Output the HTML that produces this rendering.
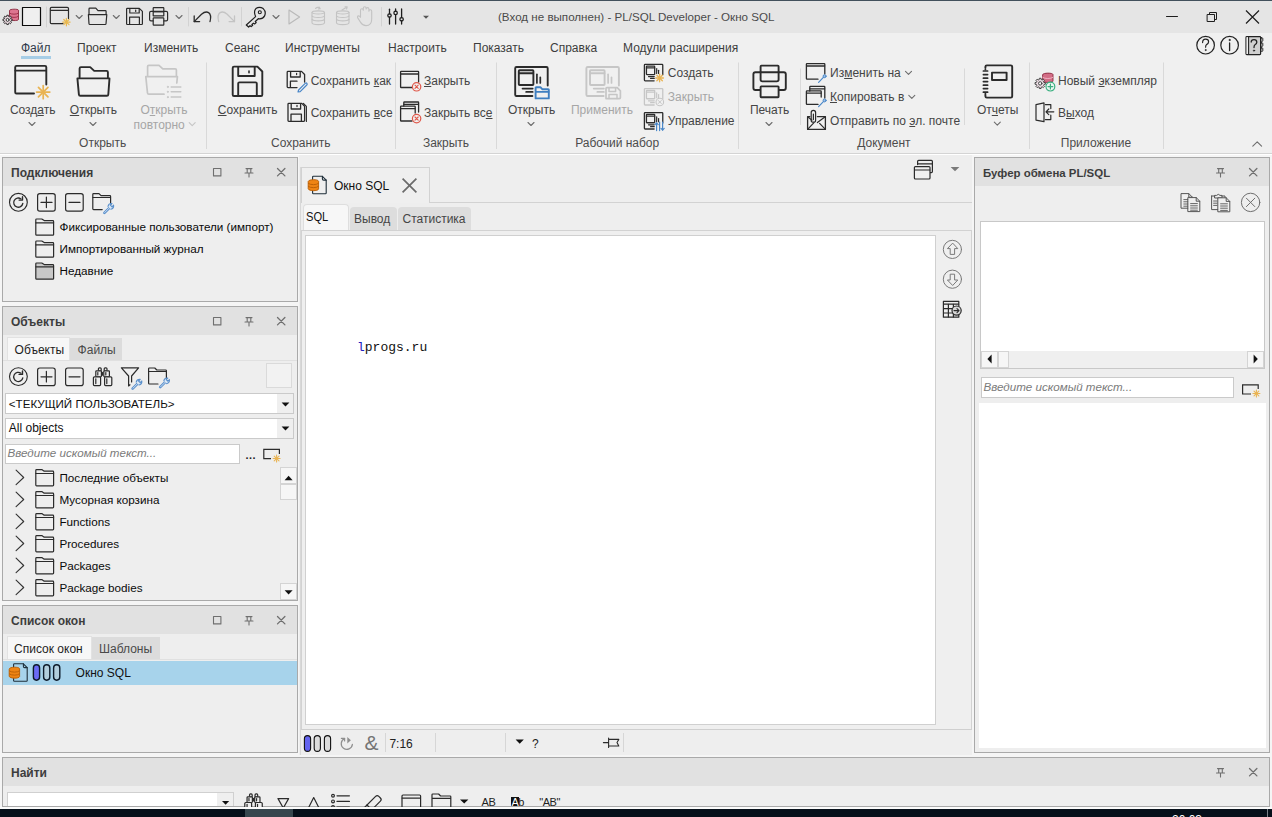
<!DOCTYPE html>
<html><head><meta charset="utf-8">
<style>
*{margin:0;padding:0;box-sizing:border-box}
html,body{width:1272px;height:817px;overflow:hidden;background:#f5f5f5;font-family:"Liberation Sans",sans-serif;font-size:12px;color:#1e1e1e}
.a{position:absolute}
.t{position:absolute;white-space:pre;line-height:14px;font-size:12px}
.dis{color:#a8a8a8}
.gl{color:#3c3c3c}
svg{position:absolute;overflow:visible}
u{text-decoration:underline;text-underline-offset:1px;text-decoration-thickness:1px}
.panel{position:absolute;border:1px solid #a9a9a9;background:#eeeeee}
.ph{position:absolute;left:0;right:0;top:0;height:28px;background:#e1e1e1}
.ptitle{position:absolute;left:8px;top:8px;font-weight:bold;font-size:12px;line-height:14px;color:#3d3d3d;white-space:pre}
.sep{position:absolute;width:1px;background:#d6d6d6}
</style></head>
<body>
<!-- top dark line -->
<div class="a" style="left:0;top:0;width:1272px;height:1px;background:#42505c"></div>
<!-- title bar -->
<div class="a" style="left:0;top:1px;width:1272px;height:32px;background:#e5e5e5"></div>
<!-- menu + ribbon -->
<div class="a" style="left:0;top:33px;width:1272px;height:120px;background:#f0f0f0"></div>
<div class="a" style="left:0;top:153px;width:1272px;height:1px;background:#d4d4d4"></div>
<div class="a" style="left:0;top:154px;width:1272px;height:1px;background:#ffffff"></div>
<div class="a" style="left:299px;top:155px;width:673px;height:600px;background:#eeeeee"></div>

<!-- TITLEBAR -->
<svg style="left:0;top:0" width="1272" height="33" viewBox="0 0 1272 33">
<g fill="none" stroke-linecap="round" stroke-linejoin="round">
 <!-- db gear -->
 <path d="M9.5 10.2 C9.5 8.8 18.5 8.8 18.5 10.2 V19.5 C18.5 21 9.5 21 9.5 19.5 Z" fill="#dd7590" stroke="#8a2a40" stroke-width="0.9"/>
 <path d="M9.6 13.2 C11 14.6 17 14.6 18.4 13.2 M9.6 16.4 C11 17.8 17 17.8 18.4 16.4" stroke="#9a2a45" stroke-width="0.9"/>
 <path d="M11.09 19.03 L12.24 19.13 L12.24 20.67 L11.09 20.77 L10.68 21.76 L11.42 22.63 L10.33 23.72 L9.46 22.98 L8.47 23.39 L8.37 24.54 L6.83 24.54 L6.73 23.39 L5.74 22.98 L4.87 23.72 L3.78 22.63 L4.52 21.76 L4.11 20.77 L2.96 20.67 L2.96 19.13 L4.11 19.03 L4.52 18.04 L3.78 17.17 L4.87 16.08 L5.74 16.82 L6.73 16.41 L6.83 15.26 L8.37 15.26 L8.47 16.41 L9.46 16.82 L10.33 16.08 L11.42 17.17 L10.68 18.04 Z" fill="#e8d7de" stroke="#333" stroke-width="1.0"/><circle cx="7.6" cy="19.9" r="1.5" fill="#f4f4f4" stroke="#333" stroke-width="1.0"/>
 <!-- square -->
 <rect x="22.5" y="7.5" width="18" height="18" fill="#efefef" stroke="#0a0a0a" stroke-width="1.2"/>
 <line x1="46.5" y1="7" x2="46.5" y2="27" stroke="#d2d2d2" stroke-width="1"/>
 <!-- new window -->
 <path d="M63 23.6 H51.5 Q50.3 23.6 50.3 22.4 V8.4 Q50.3 7.3 51.5 7.3 H67.3 Q68.5 7.3 68.5 8.4 V18.5" stroke="#2b2b2b" stroke-width="1.2"/>
 <line x1="50.5" y1="10.3" x2="68.3" y2="10.3" stroke="#2b2b2b" stroke-width="1.2"/>
 <g stroke="#e9b84e" stroke-width="1.2"><line x1="66.4" y1="18.4" x2="66.4" y2="25.8"/><line x1="62.7" y1="22.1" x2="70.1" y2="22.1"/><line x1="63.8" y1="19.5" x2="69" y2="24.7"/><line x1="69" y1="19.5" x2="63.8" y2="24.7"/></g>
 <path d="M76.2 15.5 L79.2 18.5 L82.2 15.5" stroke="#6e6e6e" stroke-width="1.1"/>
 <!-- folder -->
 <path d="M89 14 V9 Q89 8.2 89.8 8.2 H95.8 L98 10.6 H105.3 Q106.1 10.6 106.1 11.4 V14" stroke="#2b2b2b" stroke-width="1.2"/>
 <path d="M88.4 14.7 H106.8 L106 23.7 Q105.9 24.5 105.1 24.5 H89.9 Q89.1 24.5 89 23.7 Z" stroke="#2b2b2b" stroke-width="1.2"/>
 <path d="M113.3 15.5 L116.3 18.5 L119.3 15.5" stroke="#6e6e6e" stroke-width="1.1"/>
 <!-- save -->
 <path d="M126.6 9 Q126.6 8.3 127.3 8.3 H139.3 L142.4 11.4 V23.8 Q142.4 24.5 141.7 24.5 H127.3 Q126.6 24.5 126.6 23.8 Z" stroke="#2b2b2b" stroke-width="1.2"/>
 <path d="M129.8 8.5 V13 H139.2 V8.5" stroke="#2b2b2b" stroke-width="1.2"/>
 <line x1="135.7" y1="10" x2="135.7" y2="11.4" stroke="#2b2b2b" stroke-width="1.2"/>
 <path d="M129.6 24.3 V17.2 H139.4 V24.3" stroke="#2b2b2b" stroke-width="1.2"/>
 <!-- print -->
 <rect x="153.2" y="7.6" width="10.6" height="4" stroke="#2b2b2b" stroke-width="1.2" rx="0.6"/>
 <path d="M153 20.9 H151 Q149.6 20.9 149.6 19.5 V12.8 Q149.6 11.4 151 11.4 H166.2 Q167.6 11.4 167.6 12.8 V19.5 Q167.6 20.9 166.2 20.9 H164" stroke="#2b2b2b" stroke-width="1.2"/>
 <rect x="153.2" y="11.6" width="10.6" height="4.2" stroke="#2b2b2b" stroke-width="1.2"/>
 <rect x="153.2" y="17.8" width="10.6" height="7.4" stroke="#2b2b2b" stroke-width="1.2" rx="0.6"/>
 <path d="M176 15.5 L179 18.5 L182 15.5" stroke="#6e6e6e" stroke-width="1.1"/>
 <line x1="188.5" y1="7.5" x2="188.5" y2="26" stroke="#d2d2d2" stroke-width="1"/>
 <!-- undo -->
 <path d="M194.2 21.6 L201.5 14.3 Q205.5 10.8 208.6 12.6 Q211.8 14.8 210 21.6" stroke="#2b2b2b" stroke-width="1.3"/>
 <path d="M194.2 16 V21.6 H199.6" stroke="#2b2b2b" stroke-width="1.3"/>
 <!-- redo -->
 <path d="M234.5 21.6 L227.2 14.3 Q223.2 10.8 220.1 12.6 Q216.9 14.8 218.7 21.6" stroke="#c4c4c4" stroke-width="1.3"/>
 <path d="M234.5 16 V21.6 H229.1" stroke="#c4c4c4" stroke-width="1.3"/>
 <line x1="241.5" y1="7.5" x2="241.5" y2="26" stroke="#d2d2d2" stroke-width="1"/>
 <!-- key -->
 <path d="M255.6 16.6 L246.3 25 L248.6 27 L250 25.7 L251.2 26.6 L252.7 25.3 L251.9 24.4 L253.4 23.2 L254.6 24 L256.2 22.6 L255.3 21.5 L258.3 18.7 Q262.6 19.4 264.6 15.9 Q266.4 11.6 263.2 8.6 Q259.4 6 255.9 8.6 Q253.3 11.4 255.6 16.6 Z" stroke="#1e1e1e" stroke-width="1.2"/>
 <circle cx="259.8" cy="12.2" r="1.5" stroke="#1e1e1e" stroke-width="1.1"/>
 <path d="M273 15.5 L276 18.5 L279 15.5" stroke="#6e6e6e" stroke-width="1.1"/>
 <!-- play -->
 <path d="M289 10 L299.6 17 L289 24 Z" stroke="#b9b9b9" stroke-width="1.1"/>
 <!-- db commit -->
 <g stroke="#c3c3c3" stroke-width="1.1">
 <path d="M312 12.5 C312 10.3 324.5 10.3 324.5 12.5 V22.8 C324.5 25.2 312 25.2 312 22.8 Z"/>
 <path d="M312 16 C313.5 18 323 18 324.5 16 M312 19.4 C313.5 21.4 323 21.4 324.5 19.4 M312 12.5 C313.5 14.5 323 14.5 324.5 12.5"/>
 <path d="M315.5 8.5 Q318 6.2 320 8.6 M319.2 7 L320.2 8.8 L318.4 9"/>
 <path d="M336.5 12.5 C336.5 10.3 349 10.3 349 12.5 V22.8 C349 25.2 336.5 25.2 336.5 22.8 Z"/>
 <path d="M336.5 16 C338 18 347.5 18 349 16 M336.5 19.4 C338 21.4 347.5 21.4 349 19.4 M336.5 12.5 C338 14.5 347.5 14.5 349 12.5"/>
 <path d="M342 10 L347 7 M345 6.8 L347.2 6.9 L346.6 9"/>
 <!-- hand -->
 <path d="M360.5 17 V10.2 Q360.5 8.8 361.9 8.8 Q363.3 8.8 363.3 10.2 V8.2 Q363.3 6.8 364.7 6.8 Q366.1 6.8 366.1 8.2 V9 Q366.1 7.6 367.5 7.6 Q368.9 7.6 368.9 9 V11.2 Q368.9 9.8 370.3 9.8 Q371.7 9.8 371.7 11.2 V19 Q371.7 25.6 366 25.6 Q362.5 25.6 360.6 22.4 L357.6 17.6 Q357.2 16.2 358.4 15.9 Q359.6 15.8 360.5 17.3"/>
 </g>
 <line x1="381.5" y1="7.5" x2="381.5" y2="26" stroke="#d2d2d2" stroke-width="1"/>
 <!-- sliders -->
 <g stroke="#1e1e1e" stroke-width="1.3">
 <line x1="389.5" y1="9.2" x2="389.5" y2="13.8"/><line x1="389.5" y1="17.2" x2="389.5" y2="24"/><circle cx="389.5" cy="15.5" r="1.7"/>
 <line x1="395.6" y1="9" x2="395.6" y2="11.2"/><line x1="395.6" y1="14.6" x2="395.6" y2="24"/><circle cx="395.6" cy="12.9" r="1.7"/>
 <line x1="401.6" y1="9" x2="401.6" y2="17.6"/><line x1="401.6" y1="21" x2="401.6" y2="24"/><circle cx="401.6" cy="19.3" r="1.7"/>
 </g>
 <path d="M423 15.8 H429 L426 18.8 Z" fill="#555" stroke="none"/>
 <!-- window controls -->
 <line x1="1166.5" y1="16.5" x2="1177.5" y2="16.5" stroke="#1e1e1e" stroke-width="1"/>
 <rect x="1207.5" y="14.5" width="7" height="7" stroke="#1e1e1e" stroke-width="1"/>
 <path d="M1209.5 14.5 V12.5 H1216.5 V19.5 H1214.5" stroke="#1e1e1e" stroke-width="1"/>
 <path d="M1246 10.5 L1259 23.5 M1259 10.5 L1246 23.5" stroke="#1e1e1e" stroke-width="1.2" stroke-linecap="butt"/>
</g></svg>
<div class="t" style="left:498px;top:10px;color:#4a4a4a;font-size:11.6px">(Вход не выполнен) - PL/SQL Developer - Окно SQL</div>

<!-- MENU -->
<div id="menu">
<div class="t" style="left:21px;top:41px;color:#2f3a4a">Файл</div>
<div class="a" style="left:21px;top:56px;width:30px;height:3px;background:#a6cde6"></div>
<div class="t" style="left:77px;top:41px;color:#3d3d3d">Проект</div>
<div class="t" style="left:144px;top:41px;color:#3d3d3d">Изменить</div>
<div class="t" style="left:225px;top:41px;color:#3d3d3d">Сеанс</div>
<div class="t" style="left:285px;top:41px;color:#3d3d3d">Инструменты</div>
<div class="t" style="left:388px;top:41px;color:#3d3d3d">Настроить</div>
<div class="t" style="left:473px;top:41px;color:#3d3d3d">Показать</div>
<div class="t" style="left:550px;top:41px;color:#3d3d3d">Справка</div>
<div class="t" style="left:623px;top:41px;color:#3d3d3d">Модули расширения</div>
</div>

<!-- RIBBON -->
<div id="ribbon"><svg style="left:0;top:33px" width="1272" height="120" viewBox="0 33 1272 120"><g fill="none" stroke-linecap="round" stroke-linejoin="round"><line x1="206.5" y1="62.5" x2="206.5" y2="149" stroke="#d9d9d9" stroke-width="1" stroke-linecap="butt"/><line x1="395.5" y1="62.5" x2="395.5" y2="149" stroke="#d9d9d9" stroke-width="1" stroke-linecap="butt"/><line x1="496.5" y1="62.5" x2="496.5" y2="149" stroke="#d9d9d9" stroke-width="1" stroke-linecap="butt"/><line x1="738.5" y1="62.5" x2="738.5" y2="149" stroke="#d9d9d9" stroke-width="1" stroke-linecap="butt"/><line x1="1029.5" y1="62.5" x2="1029.5" y2="149" stroke="#d9d9d9" stroke-width="1" stroke-linecap="butt"/><line x1="1163.5" y1="62.5" x2="1163.5" y2="149" stroke="#d9d9d9" stroke-width="1" stroke-linecap="butt"/><line x1="800.5" y1="68.5" x2="800.5" y2="125" stroke="#d9d9d9" stroke-width="1" stroke-linecap="butt"/><line x1="964.5" y1="68.5" x2="964.5" y2="125" stroke="#d9d9d9" stroke-width="1" stroke-linecap="butt"/><path d="M34 93.5 H16.5 Q15.2 93.5 15.2 92.2 V67.2 Q15.2 65.9 16.5 65.9 H45 Q46.3 65.9 46.3 67.2 V84.5" stroke="#2b2b2b" stroke-width="1.9"/><line x1="15.4" y1="70.6" x2="46.1" y2="70.6" stroke="#2b2b2b" stroke-width="1.9"/><g stroke="#e9b453" stroke-width="1.7"><line x1="43.2" y1="85.5" x2="43.2" y2="98.69999999999999"/><line x1="36.6" y1="92.1" x2="49.800000000000004" y2="92.1"/><line x1="38.448" y1="87.348" x2="47.952000000000005" y2="96.85199999999999"/><line x1="47.952000000000005" y1="87.348" x2="38.448" y2="96.85199999999999"/></g><path d="M29 122.5 L32 125.5 L35 122.5" stroke="#6e6e6e" stroke-width="1.1"/><path d="M79.6 77.5 V68.4 Q79.6 67.1 80.9 67.1 H90.2 L94.2 70.9 H106.6 Q107.9 70.9 107.9 72.2 V77.5" stroke="#2b2b2b" stroke-width="1.9"/><path d="M77.4 78.4 H109.5 L108.3 94.5 Q108.2 95.8 106.9 95.8 H80.3 Q79 95.8 78.9 94.5 Z" stroke="#2b2b2b" stroke-width="1.9"/><path d="M90 122.5 L93 125.5 L96 122.5" stroke="#6e6e6e" stroke-width="1.1"/><path d="M147.6 75.5 V66.6 Q147.6 65.4 148.8 65.4 H159 L162.8 68.9 H175.2 Q176.4 68.9 176.4 70.1 V75.5" stroke="#c6c6c6" stroke-width="1.7"/><path d="M164 94.2 H148.8 Q147.6 94.2 147.5 93 L145.8 76.6 H177.4 L176.8 83" stroke="#c6c6c6" stroke-width="1.7"/><circle cx="167.8" cy="86.9" r="0.6" fill="#c6c6c6" stroke="#c6c6c6" stroke-width="0.8"/><line x1="171.2" y1="86.9" x2="180.8" y2="86.9" stroke="#c6c6c6" stroke-width="1.5"/><circle cx="167.8" cy="91.8" r="0.6" fill="#c6c6c6" stroke="#c6c6c6" stroke-width="0.8"/><line x1="171.2" y1="91.8" x2="180.8" y2="91.8" stroke="#c6c6c6" stroke-width="1.5"/><circle cx="167.8" cy="97.1" r="0.6" fill="#c6c6c6" stroke="#c6c6c6" stroke-width="0.8"/><line x1="171.2" y1="97.1" x2="180.8" y2="97.1" stroke="#c6c6c6" stroke-width="1.5"/><path d="M189.2 122.6 L192.2 125.6 L195.2 122.6" stroke="#c6c6c6" stroke-width="1.1"/><path d="M232.7 67.9 Q232.7 66.6 234 66.6 H257.4 L262.3 71.5 V94.7 Q262.3 96 261 96 H234 Q232.7 96 232.7 94.7 Z" stroke="#2b2b2b" stroke-width="1.9"/><path d="M238.2 67 V76 H254.7 V67" stroke="#2b2b2b" stroke-width="1.9"/><line x1="249" y1="71" x2="249" y2="72.8" stroke="#2b2b2b" stroke-width="1.6"/><path d="M238.2 95.6 V83.6 Q238.2 82.4 239.4 82.4 H255.6 Q256.8 82.4 256.8 83.6 V95.6" stroke="#2b2b2b" stroke-width="1.9"/><path d="M297 87.6 H288 Q287.2 87.6 287.2 86.8 V72.2 Q287.2 71.4 288 71.4 H301.5 L304.6 74.5 V82" stroke="#2b2b2b" stroke-width="1.3"/><path d="M290.6 71.6 V77 H300.2 V71.6" stroke="#2b2b2b" stroke-width="1.3"/><line x1="296.6" y1="73.4" x2="296.6" y2="74.6" stroke="#2b2b2b" stroke-width="1.2"/><path d="M290.4 87.4 V81.2 H297" stroke="#2b2b2b" stroke-width="1.3"/><path d="M298.6 90 L305.2 83.4 Q306.2 82.6 306.9 83.4 Q307.6 84.2 306.8 85 L300.2 91.6 L298 92 Z" stroke="#4a87c8" stroke-width="1.2"/><path d="M288 104.2 Q288 103.4 288.8 103.4 H301.8 L304.6 106.2 V120.6 Q304.6 121.4 303.8 121.4 H288.8 Q288 121.4 288 120.6 Z" stroke="#2b2b2b" stroke-width="1.3"/><path d="M291.2 103.6 V109 H300.6 V103.6" stroke="#2b2b2b" stroke-width="1.3"/><line x1="297" y1="105.4" x2="297" y2="106.6" stroke="#2b2b2b" stroke-width="1.2"/><path d="M291 121.2 V114.2 H301.4 V121.2" stroke="#2b2b2b" stroke-width="1.3"/><path d="M303.4 103.4 L306.4 106.4 V121.4" stroke="#2b2b2b" stroke-width="1.1"/><path d="M412 87.5 H401.2 Q400.6 87.5 400.6 86.9 V72 Q400.6 71.4 401.2 71.4 H418 Q418.6 71.4 418.6 72 V82" stroke="#2b2b2b" stroke-width="1.3"/><line x1="400.8" y1="74" x2="418.4" y2="74" stroke="#2b2b2b" stroke-width="1.3"/><circle cx="416.6" cy="86.8" r="4.2" fill="#f0f0f0" stroke="#e0584a" stroke-width="1.2"/><path d="M415.0 85.2 L418.20000000000005 88.39999999999999 M418.20000000000005 85.2 L415.0 88.39999999999999" stroke="#e0584a" stroke-width="1.1"/><path d="M403.8 106 V102.6 Q403.8 102 404.4 102 H418 Q418.6 102 418.6 102.6 V112" stroke="#2b2b2b" stroke-width="1.3"/><line x1="404" y1="104.4" x2="418.4" y2="104.4" stroke="#2b2b2b" stroke-width="1.3"/><path d="M412 121 H401.2 Q400.6 121 400.6 120.4 V106.8 Q400.6 106.2 401.2 106.2 H414.6 Q415.2 106.2 415.2 106.8 V113" stroke="#2b2b2b" stroke-width="1.3"/><line x1="400.8" y1="108.6" x2="415" y2="108.6" stroke="#2b2b2b" stroke-width="1.3"/><circle cx="416.6" cy="118.6" r="4.2" fill="#f0f0f0" stroke="#e0584a" stroke-width="1.2"/><path d="M415.0 117.0 L418.20000000000005 120.19999999999999 M418.20000000000005 117.0 L415.0 120.19999999999999" stroke="#e0584a" stroke-width="1.1"/><path d="M532.40 96.00 H516.50 Q515.20 96.00 515.20 94.70 V68.30 Q515.20 67.00 516.50 67.00 H546.40 Q547.70 67.00 547.70 68.30 V85.50" stroke="#2b2b2b" stroke-width="1.9"/><rect x="518.80" y="70.20" width="14.60" height="14.80" rx="0.80" stroke="#2b2b2b" stroke-width="1.9"/><line x1="519.00" y1="73.30" x2="533.20" y2="73.30" stroke="#2b2b2b" stroke-width="1.9"/><line x1="536.90" y1="74.30" x2="536.90" y2="83.00" stroke="#2b2b2b" stroke-width="1.71"/><line x1="540.30" y1="77.40" x2="540.30" y2="83.00" stroke="#2b2b2b" stroke-width="1.71"/><line x1="522.60" y1="88.60" x2="532.60" y2="88.60" stroke="#2b2b2b" stroke-width="1.9"/><line x1="526.20" y1="91.90" x2="532.60" y2="91.90" stroke="#2b2b2b" stroke-width="1.9"/><path d="M535.6 98.4 V87.8 Q535.6 87.2 536.2 87.2 H540.4 L542.2 89.2 H548.2 Q548.8 89.2 548.8 89.8 V98.4 Z" stroke="#3f7fc0" stroke-width="1.9"/><line x1="535.8" y1="91.8" x2="548.6" y2="91.8" stroke="#3f7fc0" stroke-width="1.7"/><path d="M528 122.5 L531 125.5 L534 122.5" stroke="#6e6e6e" stroke-width="1.1"/><path d="M603.60 96.00 H587.70 Q586.40 96.00 586.40 94.70 V68.30 Q586.40 67.00 587.70 67.00 H617.60 Q618.90 67.00 618.90 68.30 V85.50" stroke="#c6c6c6" stroke-width="1.9"/><rect x="590.00" y="70.20" width="14.60" height="14.80" rx="0.80" stroke="#c6c6c6" stroke-width="1.9"/><line x1="590.20" y1="73.30" x2="604.40" y2="73.30" stroke="#c6c6c6" stroke-width="1.9"/><line x1="608.10" y1="74.30" x2="608.10" y2="83.00" stroke="#c6c6c6" stroke-width="1.71"/><line x1="611.50" y1="77.40" x2="611.50" y2="83.00" stroke="#c6c6c6" stroke-width="1.71"/><line x1="593.80" y1="88.60" x2="603.80" y2="88.60" stroke="#c6c6c6" stroke-width="1.9"/><line x1="597.40" y1="91.90" x2="603.80" y2="91.90" stroke="#c6c6c6" stroke-width="1.9"/><path d="M606 98.6 V88.6 Q606 87.6 607 87.6 H617.2 L620.4 90.8 V97.6 Q620.4 98.6 619.4 98.6 Z" stroke="#c6c6c6" stroke-width="1.7"/><path d="M609 88 V91.6 H615.6 V88 M609 98.4 V94.4 H617 V98.4" stroke="#c6c6c6" stroke-width="1.5"/><path d="M654.12 80.78 H645.13 Q644.40 80.78 644.40 80.05 V65.13 Q644.40 64.40 645.13 64.40 H662.03 Q662.76 64.40 662.76 65.13 V74.85" stroke="#2b2b2b" stroke-width="1.3"/><rect x="646.43" y="66.21" width="8.25" height="8.36" rx="0.45" stroke="#2b2b2b" stroke-width="1.3"/><line x1="646.55" y1="67.96" x2="654.57" y2="67.96" stroke="#2b2b2b" stroke-width="1.3"/><line x1="656.66" y1="68.52" x2="656.66" y2="73.44" stroke="#2b2b2b" stroke-width="1.17"/><line x1="658.58" y1="70.28" x2="658.58" y2="73.44" stroke="#2b2b2b" stroke-width="1.17"/><line x1="648.58" y1="76.60" x2="654.23" y2="76.60" stroke="#2b2b2b" stroke-width="1.3"/><line x1="650.62" y1="78.47" x2="654.23" y2="78.47" stroke="#2b2b2b" stroke-width="1.3"/><g stroke="#e9b453" stroke-width="1.3"><line x1="659.6" y1="74.2" x2="659.6" y2="81.8"/><line x1="655.8000000000001" y1="78" x2="663.4" y2="78"/><line x1="656.864" y1="75.264" x2="662.336" y2="80.736"/><line x1="662.336" y1="75.264" x2="656.864" y2="80.736"/></g><path d="M654.12 104.98 H645.13 Q644.40 104.98 644.40 104.25 V89.33 Q644.40 88.60 645.13 88.60 H662.03 Q662.76 88.60 662.76 89.33 V99.05" stroke="#c6c6c6" stroke-width="1.3"/><rect x="646.43" y="90.41" width="8.25" height="8.36" rx="0.45" stroke="#c6c6c6" stroke-width="1.3"/><line x1="646.55" y1="92.16" x2="654.57" y2="92.16" stroke="#c6c6c6" stroke-width="1.3"/><line x1="656.66" y1="92.72" x2="656.66" y2="97.64" stroke="#c6c6c6" stroke-width="1.17"/><line x1="658.58" y1="94.48" x2="658.58" y2="97.64" stroke="#c6c6c6" stroke-width="1.17"/><line x1="648.58" y1="100.80" x2="654.23" y2="100.80" stroke="#c6c6c6" stroke-width="1.3"/><line x1="650.62" y1="102.67" x2="654.23" y2="102.67" stroke="#c6c6c6" stroke-width="1.3"/><circle cx="659.8" cy="102" r="3.8" fill="#f0f0f0" stroke="#c6c6c6" stroke-width="1.1"/><path d="M658.3 100.5 L661.3 103.5 M661.3 100.5 L658.3 103.5" stroke="#c6c6c6" stroke-width="1"/><path d="M654.12 128.98 H645.13 Q644.40 128.98 644.40 128.25 V113.33 Q644.40 112.60 645.13 112.60 H662.03 Q662.76 112.60 662.76 113.33 V123.05" stroke="#2b2b2b" stroke-width="1.3"/><rect x="646.43" y="114.41" width="8.25" height="8.36" rx="0.45" stroke="#2b2b2b" stroke-width="1.3"/><line x1="646.55" y1="116.16" x2="654.57" y2="116.16" stroke="#2b2b2b" stroke-width="1.3"/><line x1="656.66" y1="116.72" x2="656.66" y2="121.64" stroke="#2b2b2b" stroke-width="1.17"/><line x1="658.58" y1="118.48" x2="658.58" y2="121.64" stroke="#2b2b2b" stroke-width="1.17"/><line x1="648.58" y1="124.80" x2="654.23" y2="124.80" stroke="#2b2b2b" stroke-width="1.3"/><line x1="650.62" y1="126.67" x2="654.23" y2="126.67" stroke="#2b2b2b" stroke-width="1.3"/><g stroke="#4a87c8" stroke-width="1.2"><line x1="656.6" y1="123" x2="656.6" y2="130.6"/><line x1="659.6" y1="122" x2="659.6" y2="130.6"/><line x1="662.6" y1="122" x2="662.6" y2="130"/><path d="M655 124.6 L656.6 123 L658.2 124.6 M661 128.4 L662.6 130 L664.2 128.4"/></g><path d="M760.6 72 V66.4 Q760.6 65.6 761.4 65.6 H777.8 Q778.6 65.6 778.6 66.4 V72" stroke="#2b2b2b" stroke-width="1.9"/><path d="M760.2 90 H755.4 Q753.4 90 753.4 88 V74.2 Q753.4 72.2 755.4 72.2 H783.8 Q785.8 72.2 785.8 74.2 V88 Q785.8 90 783.8 90 H779" stroke="#2b2b2b" stroke-width="1.9"/><path d="M760.6 72.4 V79.6 Q760.6 81.4 762.4 81.4 H776.8 Q778.6 81.4 778.6 79.6 V72.4" stroke="#2b2b2b" stroke-width="1.9"/><rect x="760.6" y="86.4" width="18" height="10.8" rx="0.6" stroke="#2b2b2b" stroke-width="1.9"/><path d="M766 122.5 L769 125.5 L772 122.5" stroke="#6e6e6e" stroke-width="1.1"/><path d="M818 79.2 H807 Q806.4 79.2 806.4 78.6 V64.3 Q806.4 63.7 807 63.7 H824.2 Q824.8 63.7 824.8 64.3 V74" stroke="#2b2b2b" stroke-width="1.3"/><line x1="806.6" y1="66" x2="824.6" y2="66" stroke="#2b2b2b" stroke-width="1.3"/><line x1="818.6" y1="82.4" x2="823.6" y2="77.2" stroke="#4a87c8" stroke-width="1.2"/><circle cx="824.6" cy="76.2" r="1.5" fill="#9cc0e6" stroke="#4a87c8" stroke-width="1"/><path d="M905.5 71.4 L908.5 74.4 L911.5 71.4" stroke="#6e6e6e" stroke-width="1.1"/><path d="M809.8 91 V87 Q809.8 86.4 810.4 86.4 H824.2 Q824.8 86.4 824.8 87 V98" stroke="#2b2b2b" stroke-width="1.3"/><line x1="810" y1="88.8" x2="824.6" y2="88.8" stroke="#2b2b2b" stroke-width="1.3"/><path d="M818 104.4 H807 Q806.4 104.4 806.4 103.8 V91.4 Q806.4 90.8 807 90.8 H820.6 Q821.2 90.8 821.2 91.4 V97" stroke="#2b2b2b" stroke-width="1.3"/><line x1="806.6" y1="93.2" x2="821" y2="93.2" stroke="#2b2b2b" stroke-width="1.3"/><line x1="818.6" y1="106.6" x2="823.6" y2="101.4" stroke="#4a87c8" stroke-width="1.2"/><circle cx="824.6" cy="100.4" r="1.5" fill="#9cc0e6" stroke="#4a87c8" stroke-width="1"/><path d="M908.8 95.4 L911.8 98.4 L914.8 95.4" stroke="#6e6e6e" stroke-width="1.1"/><path d="M809.8 116.6 H807.6 V129.4 H825.4 V116.6 H817.4" stroke="#2b2b2b" stroke-width="1.3"/><path d="M807.8 129.2 L813.8 122.8 M825.2 129.2 L819.6 123.4 M817.4 122.6 L825.2 116.8 M808 117 L812 120.2" stroke="#2b2b2b" stroke-width="1.2"/><path d="M811.2 121 V112.6 Q811.2 110.4 813.4 110.4 Q815.6 110.4 815.6 112.6 V120.4 Q815.6 122.2 813.4 122.2 Q811.2 122.2 811.2 120.4 V114 M813.4 114 V119.6" stroke="#2b2b2b" stroke-width="1.2"/><path d="M985.4 68 V66.8 Q985.4 65.4 986.8 65.4 H1010.8 Q1012.2 65.4 1012.2 66.8 V96.2 Q1012.2 97.6 1010.8 97.6 H986.8 Q985.4 97.6 985.4 96.2 V94.8" stroke="#2b2b2b" stroke-width="1.9"/><line x1="983.4" y1="71" x2="987.6" y2="71" stroke="#2b2b2b" stroke-width="1.7"/><line x1="983.4" y1="74.6" x2="987.6" y2="74.6" stroke="#2b2b2b" stroke-width="1.7"/><line x1="983.4" y1="78.2" x2="987.6" y2="78.2" stroke="#2b2b2b" stroke-width="1.7"/><line x1="983.4" y1="81.6" x2="987.6" y2="81.6" stroke="#2b2b2b" stroke-width="1.7"/><line x1="983.4" y1="85.2" x2="987.6" y2="85.2" stroke="#2b2b2b" stroke-width="1.7"/><line x1="983.4" y1="88.6" x2="987.6" y2="88.6" stroke="#2b2b2b" stroke-width="1.7"/><line x1="983.4" y1="92.2" x2="987.6" y2="92.2" stroke="#2b2b2b" stroke-width="1.7"/><path d="M985.4 69.6 V69.6 M985.4 93.6 V93.6" stroke="#2b2b2b" stroke-width="1.9"/><rect x="992" y="72.6" width="14.6" height="7.4" stroke="#2b2b2b" stroke-width="1.9"/><path d="M994.3 122.2 L997.3 125.2 L1000.3 122.2" stroke="#6e6e6e" stroke-width="1.1"/><path d="M1042.6 74.6 C1042.6 72.6 1053 72.6 1053 74.6 V81 C1053 83 1042.6 83 1042.6 81 Z" fill="#d36d86" stroke="#8a2a40" stroke-width="0.9"/><path d="M1042.7 77.4 C1044.4 79 1051.2 79 1052.9 77.4" stroke="#f0b8c6" stroke-width="0.9"/><path d="M1044.08 82.44 L1045.33 82.55 L1045.33 84.25 L1044.08 84.36 L1043.63 85.46 L1044.43 86.42 L1043.22 87.63 L1042.26 86.83 L1041.16 87.28 L1041.05 88.53 L1039.35 88.53 L1039.24 87.28 L1038.14 86.83 L1037.18 87.63 L1035.97 86.42 L1036.77 85.46 L1036.32 84.36 L1035.07 84.25 L1035.07 82.55 L1036.32 82.44 L1036.77 81.34 L1035.97 80.38 L1037.18 79.17 L1038.14 79.97 L1039.24 79.52 L1039.35 78.27 L1041.05 78.27 L1041.16 79.52 L1042.26 79.97 L1043.22 79.17 L1044.43 80.38 L1043.63 81.34 Z" fill="#eadbe2" stroke="#444" stroke-width="1.0"/><circle cx="1040.2" cy="83.4" r="1.7" fill="#f4f4f4" stroke="#444" stroke-width="1.0"/><circle cx="1050.4" cy="86.6" r="4.4" fill="#eaf6f0" stroke="#3cb081" stroke-width="1.2"/><path d="M1050.4 84.2 V89 M1048 86.6 H1052.8" stroke="#3cb081" stroke-width="1.2"/><path d="M1036 104.6 L1044 102.9 V121.7 L1036 120.1 Z" stroke="#2b2b2b" stroke-width="1.2"/><path d="M1045.4 104.6 H1050.8 V108.6 M1050.8 115.2 V119.6 H1045.4" stroke="#2b2b2b" stroke-width="1.2"/><path d="M1053.8 111.8 H1046 M1048.8 109 L1046 111.8 L1048.8 114.6" stroke="#2b2b2b" stroke-width="1.2"/><circle cx="1205.6" cy="45.2" r="8.8" stroke="#222" stroke-width="1.2"/><circle cx="1229.6" cy="45.2" r="8.8" stroke="#222" stroke-width="1.2"/><line x1="1229.6" y1="43" x2="1229.6" y2="50.6" stroke="#222" stroke-width="1.3"/><circle cx="1229.6" cy="40" r="0.7" fill="#222" stroke="#222" stroke-width="0.6"/><path d="M1202.6 42.6 Q1202.6 39.2 1205.6 39.2 Q1208.6 39.2 1208.6 41.8 Q1208.6 43.6 1206.6 44.6 Q1205.6 45.2 1205.6 47.2" stroke="#222" stroke-width="1.2"/><circle cx="1205.6" cy="50" r="0.6" fill="#222" stroke="#222" stroke-width="0.6"/><rect x="1246" y="36.6" width="14.6" height="18" rx="0.8" fill="#d0d0d0" stroke="#222" stroke-width="1.2"/><rect x="1246.6" y="37.2" width="1.6" height="16.8" fill="#eeeeee" stroke="none"/><line x1="1248.6" y1="37" x2="1248.6" y2="54.2" stroke="#222" stroke-width="1.1"/><rect x="1260.8" y="37.8" width="2" height="3.6" rx="0.8" stroke="#222" stroke-width="1"/><rect x="1260.8" y="42.8" width="2" height="3.6" rx="0.8" stroke="#222" stroke-width="1"/><rect x="1260.8" y="47.8" width="2" height="3.6" rx="0.8" stroke="#222" stroke-width="1"/><path d="M1251.2 42 Q1251.2 39.6 1254 39.6 Q1256.8 39.6 1256.8 42.2 Q1256.8 43.8 1255 44.8 Q1254 45.4 1254 47.6" stroke="#222" stroke-width="1.3"/><circle cx="1254" cy="50.6" r="0.7" fill="#222" stroke="#222" stroke-width="0.6"/><path d="M1252.8 146.2 L1257.2 141.8 L1261.6 146.2" stroke="#6e6e6e" stroke-width="1.1"/></g></svg>
<div class="t" style="left:-37.3px;top:103px;width:140px;text-align:center;color:#454545">Созд<u>а</u>ть</div>
<div class="t" style="left:23.400000000000006px;top:103px;width:140px;text-align:center;color:#454545"><u>О</u>ткрыть</div>
<div class="t" style="left:94px;top:103px;width:140px;text-align:center;color:#a6a6a6">О<u>т</u>крыть</div>
<div class="t" style="left:133.5px;top:118px;color:#a6a6a6">повторно</div>
<div class="t" style="left:177.7px;top:103px;width:140px;text-align:center;color:#454545"><u>С</u>охранить</div>
<div class="t" style="left:461.6px;top:103px;width:140px;text-align:center;color:#454545">Открыть</div>
<div class="t" style="left:532px;top:103px;width:140px;text-align:center;color:#a6a6a6">Применить</div>
<div class="t" style="left:699.6px;top:103px;width:140px;text-align:center;color:#454545">Печать</div>
<div class="t" style="left:927.7px;top:103px;width:140px;text-align:center;color:#454545">От<u>ч</u>еты</div>
<div class="t" style="left:32.7px;top:136px;width:140px;text-align:center;color:#4c4c4c">Открыть</div>
<div class="t" style="left:230.8px;top:136px;width:140px;text-align:center;color:#4c4c4c">Сохранить</div>
<div class="t" style="left:376px;top:136px;width:140px;text-align:center;color:#4c4c4c">Закрыть</div>
<div class="t" style="left:547.2px;top:136px;width:140px;text-align:center;color:#4c4c4c">Рабочий набор</div>
<div class="t" style="left:813.9px;top:136px;width:140px;text-align:center;color:#4c4c4c">Документ</div>
<div class="t" style="left:1026px;top:136px;width:140px;text-align:center;color:#4c4c4c">Приложение</div>
<div class="t" style="left:310.7px;top:74px;color:#454545">Сохранить <u>к</u>ак</div>
<div class="t" style="left:310.7px;top:106px;color:#454545">Сохранить <u>в</u>се</div>
<div class="t" style="left:424px;top:74px;color:#454545"><u>З</u>акрыть</div>
<div class="t" style="left:424px;top:106px;color:#454545">Закрыть вс<u>е</u></div>
<div class="t" style="left:667.8px;top:65.5px;color:#454545">Создать</div>
<div class="t" style="left:667.8px;top:89.5px;color:#a6a6a6">Закрыть</div>
<div class="t" style="left:667.8px;top:113.5px;color:#454545">Управление</div>
<div class="t" style="left:830px;top:66px;color:#454545">Из<u>м</u>енить на</div>
<div class="t" style="left:830px;top:90px;color:#454545"><u>К</u>опировать в</div>
<div class="t" style="left:830px;top:114px;color:#454545">Отправить по <u>э</u>л. почте</div>
<div class="t" style="left:1058px;top:74px;color:#454545">Новый <u>э</u>кземпляр</div>
<div class="t" style="left:1058px;top:106px;color:#454545">В<u>ы</u>ход</div></div>

<!-- PANELS -->
<div class="panel" style="left:2px;top:157px;width:296px;height:145px">
 <div class="ph"></div><div class="ptitle">Подключения</div>
</div>
<div class="panel" style="left:2px;top:306px;width:296px;height:295px">
 <div class="ph"></div><div class="ptitle">Объекты</div>
</div>
<div class="panel" style="left:2px;top:605px;width:296px;height:148px">
 <div class="ph"></div><div class="ptitle">Список окон</div>
</div>
<div class="panel" style="left:974px;top:157px;width:296px;height:596px">
 <div class="ph"></div><div class="ptitle" style="font-size:11.45px">Буфер обмена PL/SQL</div>
</div>
<div class="panel" style="left:2px;top:757px;width:1268px;height:50px">
 <div class="ph"></div><div class="ptitle">Найти</div>
</div>

<!-- CENTER -->
<div class="t" style="left:59.5px;top:219.6px;color:#0a0a0a;font-size:11.7px">Фиксированные пользователи (импорт)</div>
<div class="t" style="left:59.5px;top:241.6px;color:#0a0a0a;font-size:11.7px">Импортированный журнал</div>
<div class="t" style="left:59.5px;top:263.6px;color:#0a0a0a;font-size:11.7px">Недавние</div>
<div class="a" style="left:7px;top:337px;width:63px;height:24px;background:#f7f7f7;border:1px solid #e2e2e2;border-bottom:none"></div>
<div class="a" style="left:70px;top:338px;width:52px;height:23px;background:#dcdcdc"></div>
<div class="a" style="left:3px;top:360px;width:294px;height:1px;background:#e0e0e0"></div>
<div class="t" style="left:14.6px;top:343px;color:#1e1e1e;">Объекты</div>
<div class="t" style="left:77.6px;top:343px;color:#4a4a4a;">Файлы</div>
<div class="a" style="left:266px;top:363px;width:26px;height:25px;background:#f2f2f2;border:1px solid #dadada"></div>
<div class="a" style="left:5px;top:393px;width:289px;height:21px;background:#fff;border:1px solid #cacaca"></div>
<div class="a" style="left:277px;top:394px;width:16px;height:19px;background:#efefef"></div>
<div class="a" style="left:5px;top:418px;width:289px;height:21px;background:#fff;border:1px solid #cacaca"></div>
<div class="a" style="left:277px;top:419px;width:16px;height:19px;background:#efefef"></div>
<div class="t" style="left:8.8px;top:397.4px;color:#111;font-size:11.6px">&lt;ТЕКУЩИЙ ПОЛЬЗОВАТЕЛЬ&gt;</div>
<div class="t" style="left:8.8px;top:420.6px;color:#111;">All objects</div>
<div class="a" style="left:5px;top:444px;width:235px;height:20px;background:#fff;border:1px solid #cacaca"></div>
<div class="t" style="left:7.5px;top:446px;color:#7b7b7b;font-style:italic;font-size:11.6px">Введите искомый текст...</div>
<div class="t" style="left:245.5px;top:448px;color:#222;font-weight:bold;font-size:11px;letter-spacing:0.5px">...</div>
<div class="t" style="left:59.4px;top:470.6px;color:#0a0a0a;font-size:11.7px">Последние объекты</div>
<div class="t" style="left:59.4px;top:492.6px;color:#0a0a0a;font-size:11.7px">Мусорная корзина</div>
<div class="t" style="left:59.4px;top:514.6px;color:#0a0a0a;font-size:11.7px">Functions</div>
<div class="t" style="left:59.4px;top:536.6px;color:#0a0a0a;font-size:11.7px">Procedures</div>
<div class="t" style="left:59.4px;top:558.6px;color:#0a0a0a;font-size:11.7px">Packages</div>
<div class="t" style="left:59.4px;top:580.6px;color:#0a0a0a;font-size:11.7px">Package bodies</div>
<div class="a" style="left:280px;top:467px;width:17px;height:133px;background:#efefef"></div>
<div class="a" style="left:280px;top:467px;width:17px;height:17px;background:#f6f6f6;border:1px solid #d4d4d4"></div>
<div class="a" style="left:280px;top:484px;width:17px;height:16px;background:#f6f6f6;border:1px solid #d4d4d4"></div>
<div class="a" style="left:280px;top:583px;width:17px;height:17px;background:#f6f6f6;border:1px solid #d4d4d4"></div>
<div class="a" style="left:7px;top:636px;width:85px;height:24px;background:#f7f7f7;border:1px solid #e2e2e2;border-bottom:none"></div>
<div class="a" style="left:92px;top:637px;width:68px;height:23px;background:#dcdcdc"></div>
<div class="a" style="left:3px;top:659px;width:294px;height:1px;background:#e0e0e0"></div>
<div class="t" style="left:14.1px;top:641.8px;color:#1e1e1e;">Список окон</div>
<div class="t" style="left:99px;top:641.8px;color:#4a4a4a;">Шаблоны</div>
<div class="a" style="left:3px;top:661px;width:294px;height:24px;background:#a7d3eb"></div>
<div class="t" style="left:75.6px;top:666.4px;color:#111;">Окно SQL</div>
<div class="a" style="left:301px;top:167px;width:129px;height:36px;background:#efefef;border:1px solid #d2d2d2;border-bottom:none"></div>
<div class="a" style="left:430px;top:202px;width:542px;height:1px;background:#d2d2d2"></div>
<div class="a" style="left:300px;top:167px;width:1px;height:588px;background:#d8d8d8"></div>
<div class="t" style="left:334px;top:179px;color:#111;">Окно SQL</div>
<div class="a" style="left:303px;top:204px;width:46px;height:27px;background:#f7f7f7;border:1px solid #dedede;border-bottom:none;border-radius:4px 4px 0 0"></div>
<div class="a" style="left:350px;top:207px;width:47px;height:23px;background:#dddddd;border-radius:4px 4px 0 0"></div>
<div class="a" style="left:398px;top:207px;width:73px;height:23px;background:#dddddd;border-radius:4px 4px 0 0"></div>
<div class="t" style="left:305.6px;top:209.6px;color:#111;transform:scaleX(0.93);transform-origin:0 0;">SQL</div>
<div class="t" style="left:354px;top:212px;color:#454545;">Вывод</div>
<div class="t" style="left:402.5px;top:212px;color:#454545;">Статистика</div>
<div class="a" style="left:301px;top:230px;width:671px;height:500px;border:1px solid #d2d2d2;border-bottom-color:#cfcfcf;background:#efefef"></div>
<div class="a" style="left:305px;top:235px;width:631px;height:490px;background:#fff;border:1px solid #d0d0d0"></div>
<div class="t" style="left:357px;top:340px;font-family:'Liberation Mono',monospace;font-size:13px;line-height:16px;color:#111"><span style="color:#2020c0">l</span>progs.ru</div>
<div class="t" style="left:389.4px;top:736.6px;color:#222;">7:16</div>
<div class="t" style="left:532px;top:736.6px;color:#222;">?</div>
<div class="a" style="left:980px;top:221px;width:285px;height:148px;background:#fff;border:1px solid #c8c8c8"></div>
<div class="a" style="left:981px;top:351px;width:283px;height:17px;background:#efefef"></div>
<div class="a" style="left:981px;top:351px;width:17px;height:17px;background:#f6f6f6;border:1px solid #d4d4d4"></div>
<div class="a" style="left:998px;top:351px;width:11px;height:17px;background:#f6f6f6;border:1px solid #d4d4d4"></div>
<div class="a" style="left:1247px;top:351px;width:17px;height:17px;background:#f6f6f6;border:1px solid #d4d4d4"></div>
<div class="a" style="left:981px;top:377px;width:253px;height:21px;background:#fff;border:1px solid #cacaca"></div>
<div class="t" style="left:983.5px;top:380px;color:#7b7b7b;font-style:italic;font-size:11.6px">Введите искомый текст...</div>
<div class="a" style="left:979px;top:403px;width:287px;height:345px;background:#fff"></div>
<div class="a" style="left:7px;top:792px;width:227px;height:14px;background:#fff;border:1px solid #d0d0d0;border-bottom:none"></div>
<div class="a" style="left:217px;top:793px;width:16px;height:13px;background:#efefef"></div>
<div class="a" style="left:3px;top:806px;width:1266px;height:1px;background:#a9a9a9"></div>
<div class="t" style="left:481.6px;top:794.6px;color:#222;font-size:11px;letter-spacing:-0.5px">AB</div>
<div class="a" style="left:511px;top:797px;width:8px;height:9px;background:#111"></div>
<div class="t" style="left:511.4px;top:794.6px;color:#222;font-size:11px;letter-spacing:-0.5px"><span style="color:#fff">A</span>b</div>
<div class="t" style="left:539.3px;top:794.6px;color:#222;font-size:11px;letter-spacing:-0.5px">"AB"</div>
<svg style="left:0;top:154px" width="1272" height="655" viewBox="0 154 1272 655"><g fill="none" stroke-linecap="round" stroke-linejoin="round"><rect x="213.5" y="168.5" width="7.4" height="7.4" stroke="#6f6f6f" stroke-width="1.1"/><path d="M246 168.6 H252 M247.2 168.6 V172.6 M250.8 168.6 V172.6 M245 173 H253 M249 173 V177" stroke="#6f6f6f" stroke-width="1.1"/><path d="M277.5 168.5 L284.9 175.9 M284.9 168.5 L277.5 175.9" stroke="#6f6f6f" stroke-width="1.3"/><rect x="213.5" y="317.5" width="7.4" height="7.4" stroke="#6f6f6f" stroke-width="1.1"/><path d="M246 317.6 H252 M247.2 317.6 V321.6 M250.8 317.6 V321.6 M245 322 H253 M249 322 V326" stroke="#6f6f6f" stroke-width="1.1"/><path d="M277.5 317.5 L284.9 324.9 M284.9 317.5 L277.5 324.9" stroke="#6f6f6f" stroke-width="1.3"/><rect x="213.5" y="616.5" width="7.4" height="7.4" stroke="#6f6f6f" stroke-width="1.1"/><path d="M246 616.6 H252 M247.2 616.6 V620.6 M250.8 616.6 V620.6 M245 621 H253 M249 621 V625" stroke="#6f6f6f" stroke-width="1.1"/><path d="M277.5 616.5 L284.9 623.9 M284.9 616.5 L277.5 623.9" stroke="#6f6f6f" stroke-width="1.3"/><path d="M1217.5 168.6 H1223.5 M1218.7 168.6 V172.6 M1222.3 168.6 V172.6 M1216.5 173 H1224.5 M1220.5 173 V177" stroke="#6f6f6f" stroke-width="1.1"/><path d="M1249.5 168.5 L1256.9 175.9 M1256.9 168.5 L1249.5 175.9" stroke="#6f6f6f" stroke-width="1.3"/><path d="M1217.5 768.6 H1223.5 M1218.7 768.6 V772.6 M1222.3 768.6 V772.6 M1216.5 773 H1224.5 M1220.5 773 V777" stroke="#6f6f6f" stroke-width="1.1"/><path d="M1249.5 768.5 L1256.9 775.9 M1256.9 768.5 L1249.5 775.9" stroke="#6f6f6f" stroke-width="1.3"/><circle cx="18.4" cy="202.3" r="8.9" stroke="#2b2b2b" stroke-width="1.15"/><path d="M22.799999999999997 203.5 A4.6 4.6 0 1 1 21.0 198.9" stroke="#2b2b2b" stroke-width="1.3"/><path d="M22.5 196.70000000000002 V200.10000000000002 H19.099999999999998" stroke="#2b2b2b" stroke-width="1.4"/><rect x="37.6" y="193.6" width="17.6" height="17.6" rx="2.2" stroke="#2b2b2b" stroke-width="1.2"/><line x1="41" y1="202.4" x2="52" y2="202.4" stroke="#2b2b2b" stroke-width="1.2"/><line x1="46.4" y1="197" x2="46.4" y2="207.6" stroke="#2b2b2b" stroke-width="1.2"/><rect x="65.6" y="193.6" width="17.6" height="17.6" rx="2.2" stroke="#2b2b2b" stroke-width="1.2"/><line x1="69" y1="202.4" x2="80" y2="202.4" stroke="#2b2b2b" stroke-width="1.2"/><path d="M102.2 209.6 H93.60000000000001 Q92.8 209.6 92.8 208.79999999999998 V194.39999999999998 Q92.8 193.6 93.60000000000001 193.6 H99.0 L101.0 195.6 H109.80000000000001 Q110.6 195.6 110.6 196.39999999999998 V204.79999999999998" stroke="#2b2b2b" stroke-width="1.2"/><line x1="93.0" y1="197.5" x2="110.4" y2="197.5" stroke="#2b2b2b" stroke-width="1.2"/><path d="M104.4 212.79999999999998 L109.4 207.79999999999998" stroke="#5a90cc" stroke-width="2.6"/><path d="M104.70 212.50 L109.4 207.79999999999998" stroke="#d6e5f7" stroke-width="0.9"/><path d="M108.0 206.39999999999998 Q108.80000000000001 203.2 112.0 203.6 L110.4 205.2 L112.0 206.79999999999998 L113.60000000000001 205.2 Q114.0 208.39999999999998 110.80000000000001 209.2" fill="#dbe8f6" stroke="#5a90cc" stroke-width="1.1"/><path d="M35.800000000000004 222.79999999999998 V219.79999999999998 Q35.800000000000004 219.0 36.6 219.0 H41.800000000000004 L44.2 220.6 H52.800000000000004 Q53.6 220.6 53.6 221.4 V222.79999999999998" fill="none" stroke="#2b2b2b" stroke-width="1.2"/><path d="M35.800000000000004 222.9 H53.6 V234.4 Q53.6 235.2 52.800000000000004 235.2 H36.6 Q35.800000000000004 235.2 35.800000000000004 234.4 Z" fill="none" stroke="#2b2b2b" stroke-width="1.2"/><path d="M35.800000000000004 244.79999999999998 V241.79999999999998 Q35.800000000000004 241.0 36.6 241.0 H41.800000000000004 L44.2 242.6 H52.800000000000004 Q53.6 242.6 53.6 243.4 V244.79999999999998" fill="none" stroke="#2b2b2b" stroke-width="1.2"/><path d="M35.800000000000004 244.9 H53.6 V256.4 Q53.6 257.2 52.800000000000004 257.2 H36.6 Q35.800000000000004 257.2 35.800000000000004 256.4 Z" fill="none" stroke="#2b2b2b" stroke-width="1.2"/><path d="M35.800000000000004 266.8 V263.8 Q35.800000000000004 263.0 36.6 263.0 H41.800000000000004 L44.2 264.6 H52.800000000000004 Q53.6 264.6 53.6 265.40000000000003 V266.8" fill="#c8c8c8" stroke="#2b2b2b" stroke-width="1.2"/><path d="M35.800000000000004 266.90000000000003 H53.6 V278.40000000000003 Q53.6 279.20000000000005 52.800000000000004 279.20000000000005 H36.6 Q35.800000000000004 279.20000000000005 35.800000000000004 278.40000000000003 Z" fill="#c8c8c8" stroke="#2b2b2b" stroke-width="1.2"/><circle cx="18.4" cy="376.6" r="8.9" stroke="#2b2b2b" stroke-width="1.15"/><path d="M22.799999999999997 377.8 A4.6 4.6 0 1 1 21.0 373.20000000000005" stroke="#2b2b2b" stroke-width="1.3"/><path d="M22.5 371.0 V374.40000000000003 H19.099999999999998" stroke="#2b2b2b" stroke-width="1.4"/><rect x="37.6" y="368.0" width="17.6" height="17.6" rx="2.2" stroke="#2b2b2b" stroke-width="1.2"/><line x1="41" y1="376.79999999999995" x2="52" y2="376.79999999999995" stroke="#2b2b2b" stroke-width="1.2"/><line x1="46.4" y1="371.4" x2="46.4" y2="382.0" stroke="#2b2b2b" stroke-width="1.2"/><rect x="65.6" y="368.0" width="17.6" height="17.6" rx="2.2" stroke="#2b2b2b" stroke-width="1.2"/><line x1="69" y1="376.79999999999995" x2="80" y2="376.79999999999995" stroke="#2b2b2b" stroke-width="1.2"/><g stroke="#2b2b2b" stroke-width="1.2" fill="#eeeeee"><rect x="98.40" y="367.80" width="2.80" height="3.20" rx="1"/><rect x="104.20" y="367.80" width="2.80" height="3.20" rx="1"/><rect x="95.80" y="370.80" width="5.60" height="6.00" rx="0.8"/><rect x="103.80" y="370.80" width="5.60" height="6.00" rx="0.8"/><rect x="93.40" y="376.80" width="7.20" height="8.80" rx="1"/><rect x="104.60" y="376.80" width="7.20" height="8.80" rx="1"/><line x1="95.80" y1="378.80" x2="95.80" y2="383.60"/><line x1="106.80" y1="378.80" x2="106.80" y2="383.60"/><line x1="97.80" y1="372.60" x2="97.80" y2="375.00"/><line x1="105.80" y1="372.60" x2="105.80" y2="375.00"/><line x1="102.60" y1="372.40" x2="102.60" y2="375.20"/></g><path d="M121.4 367.79999999999995 H138.6 L131.6 376.0 V382.0 M121.4 367.79999999999995 L128.6 376.0 V386.0 L130 384.79999999999995" stroke="#2b2b2b" stroke-width="1.2"/><path d="M132.6 388.59999999999997 L137.6 383.59999999999997" stroke="#5a90cc" stroke-width="2.6"/><path d="M132.90 388.30 L137.6 383.59999999999997" stroke="#d6e5f7" stroke-width="0.9"/><path d="M136.2 382.2 Q137.0 378.99999999999994 140.2 379.4 L138.6 380.99999999999994 L140.2 382.59999999999997 L141.79999999999998 380.99999999999994 Q142.2 384.2 139.0 384.99999999999994" fill="#dbe8f6" stroke="#5a90cc" stroke-width="1.1"/><path d="M158 384.0 H149.4 Q148.6 384.0 148.6 383.20000000000005 V368.8 Q148.6 368.0 149.4 368.0 H154.8 L156.8 370.0 H165.6 Q166.4 370.0 166.4 370.8 V379.20000000000005" stroke="#2b2b2b" stroke-width="1.2"/><line x1="148.8" y1="371.5" x2="166.2" y2="371.5" stroke="#2b2b2b" stroke-width="1.2"/><path d="M160.2 387.20000000000005 L165.2 382.20000000000005" stroke="#5a90cc" stroke-width="2.6"/><path d="M160.50 386.90 L165.2 382.20000000000005" stroke="#d6e5f7" stroke-width="0.9"/><path d="M163.79999999999998 380.80000000000007 Q164.6 377.6 167.79999999999998 378.00000000000006 L166.2 379.6 L167.79999999999998 381.20000000000005 L169.39999999999998 379.6 Q169.79999999999998 382.80000000000007 166.6 383.6" fill="#dbe8f6" stroke="#5a90cc" stroke-width="1.1"/><path d="M16.1 470.2 L23.700000000000003 477.5 L16.1 484.7" stroke="#333" stroke-width="1.1"/><path d="M35.800000000000004 473.4 V470.4 Q35.800000000000004 469.59999999999997 36.6 469.59999999999997 H41.800000000000004 L44.2 471.2 H52.800000000000004 Q53.6 471.2 53.6 472.0 V473.4" fill="none" stroke="#2b2b2b" stroke-width="1.2"/><path d="M35.800000000000004 473.5 H53.6 V485.0 Q53.6 485.8 52.800000000000004 485.8 H36.6 Q35.800000000000004 485.8 35.800000000000004 485.0 Z" fill="none" stroke="#2b2b2b" stroke-width="1.2"/><path d="M16.1 492.2 L23.700000000000003 499.5 L16.1 506.7" stroke="#333" stroke-width="1.1"/><path d="M35.800000000000004 495.4 V492.4 Q35.800000000000004 491.59999999999997 36.6 491.59999999999997 H41.800000000000004 L44.2 493.2 H52.800000000000004 Q53.6 493.2 53.6 494.0 V495.4" fill="none" stroke="#2b2b2b" stroke-width="1.2"/><path d="M35.800000000000004 495.5 H53.6 V507.0 Q53.6 507.8 52.800000000000004 507.8 H36.6 Q35.800000000000004 507.8 35.800000000000004 507.0 Z" fill="none" stroke="#2b2b2b" stroke-width="1.2"/><path d="M16.1 514.2 L23.700000000000003 521.5 L16.1 528.7" stroke="#333" stroke-width="1.1"/><path d="M35.800000000000004 517.4000000000001 V514.4000000000001 Q35.800000000000004 513.6 36.6 513.6 H41.800000000000004 L44.2 515.2 H52.800000000000004 Q53.6 515.2 53.6 516.0 V517.4000000000001" fill="none" stroke="#2b2b2b" stroke-width="1.2"/><path d="M35.800000000000004 517.5 H53.6 V529.0 Q53.6 529.8000000000001 52.800000000000004 529.8000000000001 H36.6 Q35.800000000000004 529.8000000000001 35.800000000000004 529.0 Z" fill="none" stroke="#2b2b2b" stroke-width="1.2"/><path d="M16.1 536.2 L23.700000000000003 543.5 L16.1 550.7" stroke="#333" stroke-width="1.1"/><path d="M35.800000000000004 539.4000000000001 V536.4000000000001 Q35.800000000000004 535.6 36.6 535.6 H41.800000000000004 L44.2 537.2 H52.800000000000004 Q53.6 537.2 53.6 538.0 V539.4000000000001" fill="none" stroke="#2b2b2b" stroke-width="1.2"/><path d="M35.800000000000004 539.5 H53.6 V551.0 Q53.6 551.8000000000001 52.800000000000004 551.8000000000001 H36.6 Q35.800000000000004 551.8000000000001 35.800000000000004 551.0 Z" fill="none" stroke="#2b2b2b" stroke-width="1.2"/><path d="M16.1 558.2 L23.700000000000003 565.5 L16.1 572.7" stroke="#333" stroke-width="1.1"/><path d="M35.800000000000004 561.4000000000001 V558.4000000000001 Q35.800000000000004 557.6 36.6 557.6 H41.800000000000004 L44.2 559.2 H52.800000000000004 Q53.6 559.2 53.6 560.0 V561.4000000000001" fill="none" stroke="#2b2b2b" stroke-width="1.2"/><path d="M35.800000000000004 561.5 H53.6 V573.0 Q53.6 573.8000000000001 52.800000000000004 573.8000000000001 H36.6 Q35.800000000000004 573.8000000000001 35.800000000000004 573.0 Z" fill="none" stroke="#2b2b2b" stroke-width="1.2"/><path d="M16.1 580.2 L23.700000000000003 587.5 L16.1 594.7" stroke="#333" stroke-width="1.1"/><path d="M35.800000000000004 583.4000000000001 V580.4000000000001 Q35.800000000000004 579.6 36.6 579.6 H41.800000000000004 L44.2 581.2 H52.800000000000004 Q53.6 581.2 53.6 582.0 V583.4000000000001" fill="none" stroke="#2b2b2b" stroke-width="1.2"/><path d="M35.800000000000004 583.5 H53.6 V595.0 Q53.6 595.8000000000001 52.800000000000004 595.8000000000001 H36.6 Q35.800000000000004 595.8000000000001 35.800000000000004 595.0 Z" fill="none" stroke="#2b2b2b" stroke-width="1.2"/><path d="M284.6 480.2 H292.6 L288.6 475.8 Z" fill="#111" stroke="none"/><path d="M284.6 590.2 H292.6 L288.6 594.6 Z" fill="#111" stroke="none"/><path d="M281.6 402.4 H289.4 L285.5 406.4 Z" fill="#111" stroke="none"/><path d="M281.6 426.6 H289.4 L285.5 430.6 Z" fill="#111" stroke="none"/><path d="M271 458.6 H263.8 V449.4 H279.4 V454" stroke-linejoin="miter" stroke-linecap="butt" stroke="#2b2b2b" stroke-width="1.2"/><g stroke="#e9b453" stroke-width="1.1"><line x1="276.6" y1="455" x2="276.6" y2="462"/><line x1="273.1" y1="458.5" x2="280.1" y2="458.5"/><line x1="274.2" y1="456.1" x2="279" y2="460.9"/><line x1="279" y1="456.1" x2="274.2" y2="460.9"/></g><path d="M13.60 667.00 V664.60 Q13.60 663.80 14.40 663.80 H23.40 L27.20 667.60 V680.40 Q27.20 681.20 26.40 681.20 H14.40 Q13.60 681.20 13.60 680.40 V678.00" fill="none" stroke="#1f2f3a" stroke-width="1.1"/><path d="M23.40 663.80 V666.40 Q23.40 667.60 24.60 667.60 H27.20" stroke="#1f2f3a" stroke-width="1.1"/><path d="M9.20 668.80 C9.20 666.60 19.60 666.60 19.60 668.80 V676.40 C19.60 678.80 9.20 678.80 9.20 676.40 Z" fill="#ef8414" stroke="#b85e06" stroke-width="0.9"/><path d="M9.40 671.00 C11.00 672.60 17.80 672.60 19.40 671.00 M9.40 674.00 C11.00 675.60 17.80 675.60 19.40 674.00" stroke="#b85e06" stroke-width="0.9"/><rect x="33.400000000000006" y="664.8" width="6.2" height="15.4" rx="3.1" ry="3.1" fill="#6b6bf5" stroke="#0d1a2a" stroke-width="1.4"/><rect x="43.6" y="664.8" width="6.2" height="15.4" rx="3.1" ry="3.1" fill="#b2cedd" stroke="#0d1a2a" stroke-width="1.4"/><rect x="53.6" y="664.8" width="6.2" height="15.4" rx="3.1" ry="3.1" fill="#b2cedd" stroke="#0d1a2a" stroke-width="1.4"/><path d="M312.60 179.50 V177.10 Q312.60 176.30 313.40 176.30 H322.40 L326.20 180.10 V192.90 Q326.20 193.70 325.40 193.70 H313.40 Q312.60 193.70 312.60 192.90 V190.50" fill="none" stroke="#1f2f3a" stroke-width="1.1"/><path d="M322.40 176.30 V178.90 Q322.40 180.10 323.60 180.10 H326.20" stroke="#1f2f3a" stroke-width="1.1"/><path d="M308.20 181.30 C308.20 179.10 318.60 179.10 318.60 181.30 V188.90 C318.60 191.30 308.20 191.30 308.20 188.90 Z" fill="#ef8414" stroke="#b85e06" stroke-width="0.9"/><path d="M308.40 183.50 C310.00 185.10 316.80 185.10 318.40 183.50 M308.40 186.50 C310.00 188.10 316.80 188.10 318.40 186.50" stroke="#b85e06" stroke-width="0.9"/><path d="M402.6 178.6 L416.4 192.4 M416.4 178.6 L402.6 192.4" stroke="#6b6b6b" stroke-width="1.7" stroke-linecap="butt"/><path d="M917.6 164.6 V161.4 Q917.6 160.4 918.6 160.4 H931.4 Q932.4 160.4 932.4 161.4 V171.6 Q932.4 172.6 931.4 172.6 H930" stroke="#2b2b2b" stroke-width="1.2"/><line x1="917.8" y1="163.8" x2="932.2" y2="163.8" stroke="#2b2b2b" stroke-width="1.2"/><rect x="914.4" y="166.6" width="15.6" height="12.4" rx="1" fill="#f0f0f0" stroke="#2b2b2b" stroke-width="1.2"/><line x1="914.6" y1="170" x2="929.8" y2="170" stroke="#2b2b2b" stroke-width="1.2"/><path d="M950.6 167 H959.4 L955 171.2 Z" fill="#7a7a7a" stroke="none"/><circle cx="952.4" cy="249.4" r="9.1" stroke="#7a7a7a" stroke-width="1"/><path d="M952.4 243.4 L947.4 248.6 H950.2 V254.4 H954.6 V248.6 H957.4 Z" stroke="#7a7a7a" stroke-width="1"/><circle cx="952.4" cy="279.2" r="9.1" stroke="#7a7a7a" stroke-width="1"/><path d="M952.4 285.2 L947.4 280.0 H950.2 V274.2 H954.6 V280.0 H957.4 Z" stroke="#7a7a7a" stroke-width="1"/><g stroke="#2b2b2b" stroke-width="1.2"><rect x="943.4" y="301.4" width="15.4" height="15.8"/><line x1="943.6" y1="304.2" x2="958.6" y2="304.2"/><line x1="943.6" y1="308.6" x2="953" y2="308.6"/><line x1="943.6" y1="313" x2="953" y2="313"/><line x1="948.4" y1="304.4" x2="948.4" y2="317"/><line x1="953.4" y1="304.4" x2="953.4" y2="317"/></g><circle cx="956.6" cy="310.6" r="4.6" fill="#d8d8d8" stroke="#2b2b2b" stroke-width="1.2"/><path d="M954 310.6 H959 M957 308.6 L959 310.6 L957 312.6" stroke="#2b2b2b" stroke-width="1.1"/><rect x="304.4" y="735.6" width="6.2" height="15.8" rx="3.1" fill="#6464f0" stroke="#111" stroke-width="1.1"/><rect x="314.2" y="735.6" width="6.2" height="15.8" rx="3.1" fill="#dcdcdc" stroke="#111" stroke-width="1.1"/><rect x="324.4" y="735.6" width="6.2" height="15.8" rx="3.1" fill="#dcdcdc" stroke="#111" stroke-width="1.1"/><path d="M352.4 744.4 A5.6 5.6 0 1 1 344.6 738.6" stroke="#8f8f8f" stroke-width="1.2"/><path d="M341.4 738.4 H344.6 V741" stroke="#8f8f8f" stroke-width="1.2"/><path d="M347.3 737 L350.9 740.3 L347.3 743.6 Z" fill="#8f8f8f" stroke="none"/><path d="M515.6 739.6 H523.8 L519.7 743.8 Z" fill="#111" stroke="none"/><path d="M603.4 742.6 H608.6 M608.6 738 V747.4 M608.6 739.4 H618.8 L617 742.6 L618.8 746 H608.6" stroke="#2b2b2b" stroke-width="1.1"/><line x1="385.5" y1="733" x2="385.5" y2="752" stroke="#d6d6d6" stroke-width="1" stroke-linecap="butt"/><line x1="435.5" y1="733" x2="435.5" y2="752" stroke="#d6d6d6" stroke-width="1" stroke-linecap="butt"/><line x1="505.5" y1="733" x2="505.5" y2="752" stroke="#d6d6d6" stroke-width="1" stroke-linecap="butt"/><line x1="623.5" y1="733" x2="623.5" y2="752" stroke="#d6d6d6" stroke-width="1" stroke-linecap="butt"/><path d="M1181.4 193.6 H1188.8000000000002 L1192.4 197.2 V208.2 H1181.4 Z" fill="#f0f0f0" stroke="#555" stroke-width="1"/><path d="M1188.8000000000002 193.6 V197.2 H1192.4" stroke="#555" stroke-width="1"/><line x1="1183.8000000000002" y1="199.6" x2="1190.0" y2="199.6" stroke="#555" stroke-width="0.9"/><line x1="1183.8000000000002" y1="201.79999999999998" x2="1190.0" y2="201.79999999999998" stroke="#555" stroke-width="0.9"/><line x1="1183.8000000000002" y1="204.0" x2="1190.0" y2="204.0" stroke="#555" stroke-width="0.9"/><line x1="1183.8000000000002" y1="206.2" x2="1190.0" y2="206.2" stroke="#555" stroke-width="0.9"/><path d="M1188.2 197.6 H1196.2 L1199.8 201.2 V211.6 H1188.2 Z" fill="#f0f0f0" stroke="#555" stroke-width="1"/><path d="M1196.2 197.6 V201.2 H1199.8" stroke="#555" stroke-width="1"/><line x1="1190.6000000000001" y1="203.6" x2="1197.3999999999999" y2="203.6" stroke="#555" stroke-width="0.9"/><line x1="1190.6000000000001" y1="205.79999999999998" x2="1197.3999999999999" y2="205.79999999999998" stroke="#555" stroke-width="0.9"/><line x1="1190.6000000000001" y1="208.0" x2="1197.3999999999999" y2="208.0" stroke="#555" stroke-width="0.9"/><line x1="1190.6000000000001" y1="210.2" x2="1197.3999999999999" y2="210.2" stroke="#555" stroke-width="0.9"/><path d="M1211.6 196 V209.6 H1218 M1211.6 196 H1214.6 M1222 196 H1225 V200" stroke="#555" stroke-width="1"/><path d="M1214.6 197.6 V195.4 H1216.6 Q1218.3 193.2 1220 195.4 H1222 V197.6 Z" stroke="#555" stroke-width="1"/><line x1="1213.6" y1="201.0" x2="1217" y2="201.0" stroke="#555" stroke-width="0.9"/><line x1="1213.6" y1="203.2" x2="1217" y2="203.2" stroke="#555" stroke-width="0.9"/><line x1="1213.6" y1="205.4" x2="1217" y2="205.4" stroke="#555" stroke-width="0.9"/><path d="M1218.2 197.8 H1226.2 L1229.8 201.4 V211.8 H1218.2 Z" fill="#f0f0f0" stroke="#555" stroke-width="1"/><path d="M1226.2 197.8 V201.4 H1229.8" stroke="#555" stroke-width="1"/><line x1="1220.6000000000001" y1="203.8" x2="1227.3999999999999" y2="203.8" stroke="#555" stroke-width="0.9"/><line x1="1220.6000000000001" y1="206.0" x2="1227.3999999999999" y2="206.0" stroke="#555" stroke-width="0.9"/><line x1="1220.6000000000001" y1="208.20000000000002" x2="1227.3999999999999" y2="208.20000000000002" stroke="#555" stroke-width="0.9"/><line x1="1220.6000000000001" y1="210.4" x2="1227.3999999999999" y2="210.4" stroke="#555" stroke-width="0.9"/><circle cx="1250.6" cy="202.4" r="9.2" stroke="#6f6f6f" stroke-width="1"/><path d="M1246.4 198.2 L1254.8 206.6 M1254.8 198.2 L1246.4 206.6" stroke="#6f6f6f" stroke-width="1"/><path d="M991.6 354.6 V363.4 L987.4 359 Z" fill="#111" stroke="none"/><path d="M1253.6 354.6 V363.4 L1257.8 359 Z" fill="#111" stroke="none"/><path d="M1251 394 H1242.6 V384.8 H1258.2 V389" stroke-linejoin="miter" stroke-linecap="butt" stroke="#2b2b2b" stroke-width="1.2"/><g stroke="#e9b453" stroke-width="1.1"><line x1="1256.4" y1="390" x2="1256.4" y2="397"/><line x1="1252.9" y1="393.5" x2="1259.9" y2="393.5"/><line x1="1254" y1="391.1" x2="1258.8" y2="395.9"/><line x1="1258.8" y1="391.1" x2="1254" y2="395.9"/></g><path d="M222 801 H229.2 L225.6 804.8 Z" fill="#111" stroke="none"/><g stroke="#2b2b2b" stroke-width="1.2" fill="#eeeeee"><rect x="249.53" y="793.96" width="2.66" height="3.04" rx="1"/><rect x="255.04" y="793.96" width="2.66" height="3.04" rx="1"/><rect x="247.06" y="796.81" width="5.32" height="5.70" rx="0.8"/><rect x="254.66" y="796.81" width="5.32" height="5.70" rx="0.8"/><rect x="244.78" y="802.51" width="6.84" height="8.36" rx="1"/><rect x="255.42" y="802.51" width="6.84" height="8.36" rx="1"/><line x1="247.06" y1="804.41" x2="247.06" y2="808.97"/><line x1="257.51" y1="804.41" x2="257.51" y2="808.97"/><line x1="248.96" y1="798.52" x2="248.96" y2="800.80"/><line x1="256.56" y1="798.52" x2="256.56" y2="800.80"/><line x1="253.52" y1="798.33" x2="253.52" y2="800.99"/></g><path d="M278 798.6 H288.6 L283.3 808 Z" stroke="#2b2b2b" stroke-width="1.2"/><path d="M308.4 808 L313.7 797.6 L319 808" stroke="#2b2b2b" stroke-width="1.2"/><g stroke="#2b2b2b" stroke-width="1.2"><circle cx="333" cy="795.8" r="1.4"/><circle cx="333" cy="801.4" r="1.4"/><line x1="337" y1="795.8" x2="349.4" y2="795.8"/><line x1="337" y1="801.4" x2="349.4" y2="801.4"/><circle cx="333" cy="807" r="1.4"/><line x1="337" y1="807" x2="349.4" y2="807"/></g><path d="M364 808 L375.6 796.4 Q377.2 794.8 378.8 796.4 L380.4 798 Q382 799.6 380.4 801.2 L370 811.6" stroke="#2b2b2b" stroke-width="1.2"/><path d="M367 805 L372.6 810.6" stroke="#2b2b2b" stroke-width="1.2"/><path d="M402 808 V796 Q402 795 403 795 H419.6 Q420.6 795 420.6 796 V808" stroke="#2b2b2b" stroke-width="1.2"/><line x1="402.2" y1="798.2" x2="420.4" y2="798.2" stroke="#2b2b2b" stroke-width="1.2"/><path d="M432 808 V794.8 Q432 794 432.8 794 H438.6 L440.6 796 H450 Q450.8 796 450.8 796.8 V808 M432.2 798.4 H450.6" stroke="#2b2b2b" stroke-width="1.2"/><path d="M460 799.6 H468.4 L464.2 803.6 Z" fill="#111" stroke="none"/></g></svg>

<div class="t" style="left:364.5px;top:731.5px;font-size:21px;line-height:22px;color:#747474">&amp;</div>
<div class="a" style="left:0;top:807px;width:1272px;height:2px;background:#fbfbfb"></div>
<!-- taskbar -->
<div class="a" style="left:0;top:809px;width:1272px;height:8px;background:#06101a"></div>
<div class="a" style="left:245px;top:809px;width:48px;height:8px;background:#37474e"></div>
<div class="t" style="left:1172px;top:812.5px;color:#fff;font-size:12px">20:03</div>
<div class="a" style="left:1267px;top:809px;width:1px;height:8px;background:#7a8088"></div>
</body></html>
